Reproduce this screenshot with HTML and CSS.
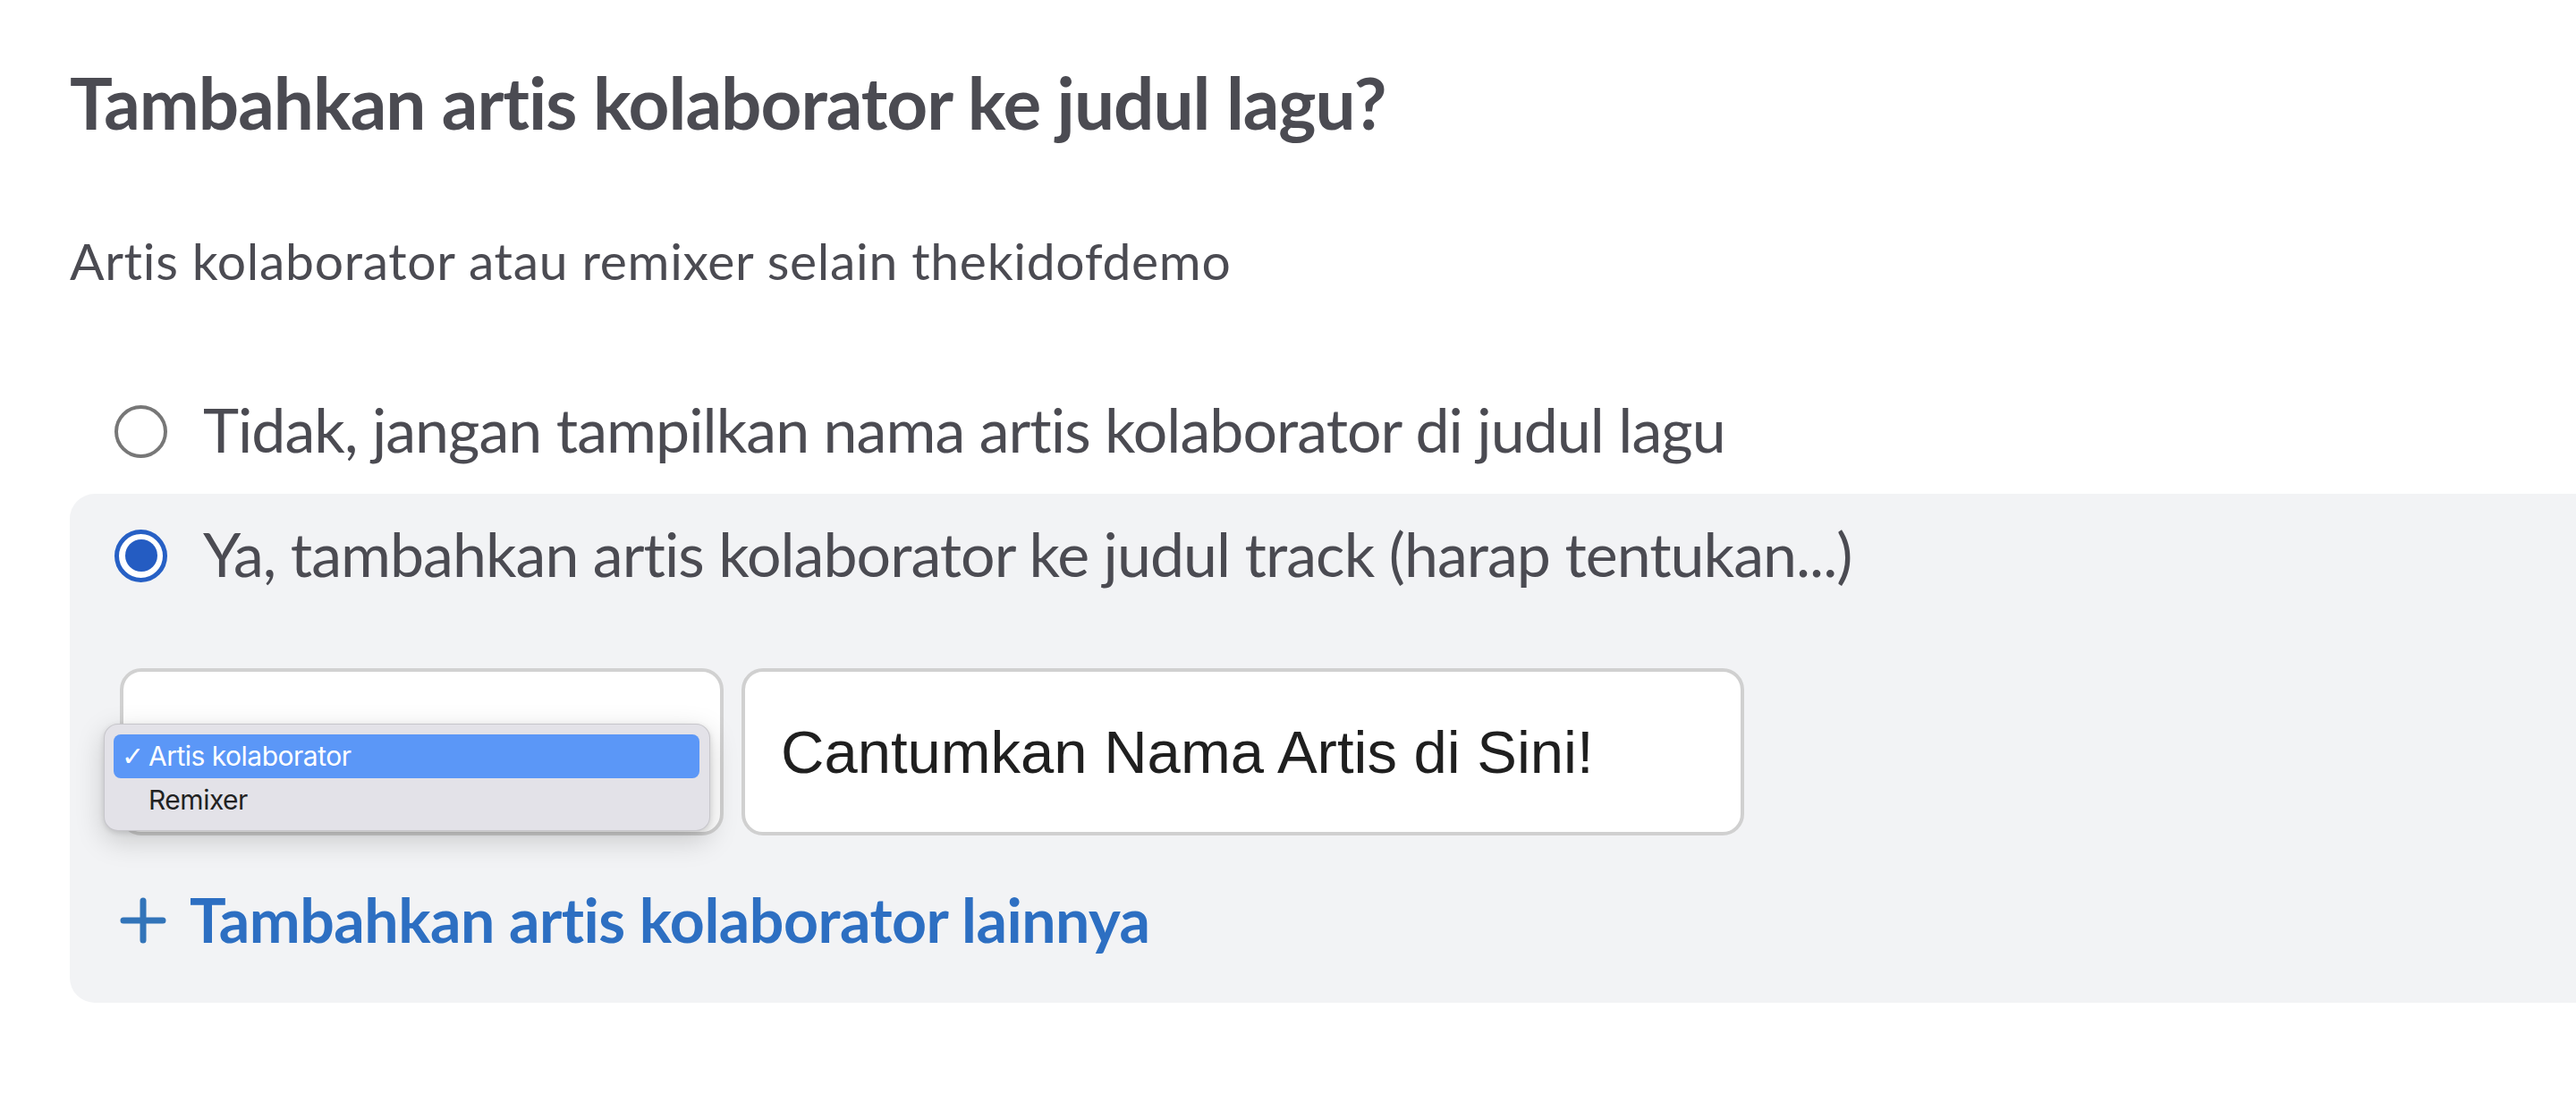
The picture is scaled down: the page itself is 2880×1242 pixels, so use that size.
FILE: index.html
```html
<!DOCTYPE html>
<html lang="id">
<head>
<meta charset="utf-8">
<title>Artis kolaborator</title>
<link rel="stylesheet" href="styles.css">
</head>
<body>
<main class="page">
  <h1 class="title">Tambahkan artis kolaborator ke judul lagu?</h1>
  <p class="subtitle">Artis kolaborator atau remixer selain thekidofdemo</p>
  <div class="options">
    <label class="option">
      <span class="radio"></span>
      <span class="option-label">Tidak, jangan tampilkan nama artis kolaborator di judul lagu</span>
    </label>
    <div class="panel">
      <label class="option">
        <span class="radio radio-on"><span class="radio-dot"></span></span>
        <span class="option-label">Ya, tambahkan artis kolaborator ke judul track (harap tentukan...)</span>
      </label>
      <div class="fields">
        <div class="select-box">
          <div class="menu">
            <div class="menu-item menu-item-active"><span class="check">✓</span><span>Artis kolaborator</span></div>
            <div class="menu-item"><span class="check"></span><span>Remixer</span></div>
          </div>
        </div>
        <div class="text-input">Cantumkan Nama Artis di Sini!</div>
      </div>
      <a class="add-link" href="#">
        <svg class="plus" viewBox="0 0 52 52" width="52" height="52" aria-hidden="true">
          <path d="M26 4 V48 M4 26 H48" stroke="#3274b9" stroke-width="7" stroke-linecap="round" fill="none"/>
        </svg>
        <span>Tambahkan artis kolaborator lainnya</span>
      </a>
    </div>
  </div>
</main>
</body>
</html>
```

FILE: styles.css
```css
html, body {
  margin: 0;
  padding: 0;
  background: #ffffff;
  overflow: hidden;
}

.page {
  padding-left: 78px;
  font-family: "Lato", "Noto Sans", sans-serif;
  font-variant-ligatures: none;
  color: #4b4b52;
}

.title {
  margin: 66px 0 0 0;
  font-size: 80px;
  line-height: 1.2;
  font-weight: 700;
  letter-spacing: -1px;
}

.subtitle {
  margin: 95px 0 0 0;
  font-size: 57px;
  line-height: 1.2;
  font-weight: 400;
  letter-spacing: 0.7px;
}

.options {
  margin-top: 114px;
}

.option {
  display: flex;
  align-items: center;
  padding-left: 50px;
  font-size: 68px;
  line-height: 1.2;
  letter-spacing: -0.95px;
}

.radio {
  flex: none;
  width: 59px;
  height: 59px;
  box-sizing: border-box;
  border: 4px solid #777777;
  border-radius: 50%;
  margin-top: 5px;
  margin-right: 40px;
  background: #ffffff;
  display: flex;
  align-items: center;
  justify-content: center;
}

.radio-on {
  border: 5px solid #2760c5;
}

.radio-dot {
  width: 36px;
  height: 36px;
  border-radius: 50%;
  background: #245cc2;
}

.panel {
  margin-top: 31px;
  padding: 26px 0 53px 0;
  background: #f2f3f5;
  border-radius: 28px 0 0 28px;
}

.fields {
  display: flex;
  gap: 20px;
  margin-top: 87px;
  padding-left: 56px;
}

.select-box {
  position: relative;
  width: 675px;
  height: 187px;
  box-sizing: border-box;
  border: 4px solid #d1d1d1;
  border-radius: 24px;
  background: #ffffff;
}

.menu {
  position: absolute;
  left: -22px;
  top: 58px;
  width: 678px;
  height: 120px;
  box-sizing: border-box;
  padding: 11px 11px 11px 10px;
  background: #e3e2e8;
  border: 1px solid rgba(0, 0, 0, 0.12);
  border-radius: 16px;
  box-shadow: 0 10px 32px rgba(0, 0, 0, 0.18), 0 2px 6px rgba(0, 0, 0, 0.12);
  font-family: "Inter", "Liberation Sans", sans-serif;
  font-size: 30px;
  letter-spacing: -0.5px;
  color: #222222;
}

.menu-item {
  display: flex;
  align-items: center;
  height: 49px;
  border-radius: 8px;
}

.menu-item-active {
  background: #5b97f7;
  color: #ffffff;
}

.check {
  width: 30px;
  padding-left: 9px;
  font-family: "DejaVu Sans", sans-serif;
  font-size: 30px;
}

.text-input {
  display: flex;
  align-items: center;
  width: 1121px;
  height: 187px;
  box-sizing: border-box;
  padding-left: 40px;
  border: 4px solid #d0d0d0;
  border-radius: 24px;
  background: #ffffff;
  font-family: "Liberation Sans", Arial, sans-serif;
  font-size: 67px;
  color: #1f1f1f;
}

.add-link {
  display: flex;
  align-items: center;
  margin-top: 53px;
  padding-left: 56px;
  font-size: 68px;
  line-height: 1.2;
  font-weight: 700;
  letter-spacing: -0.5px;
  color: #2d6fc2;
  text-decoration: none;
}

.plus {
  flex: none;
  margin-top: 4px;
  margin-right: 26px;
}
```
